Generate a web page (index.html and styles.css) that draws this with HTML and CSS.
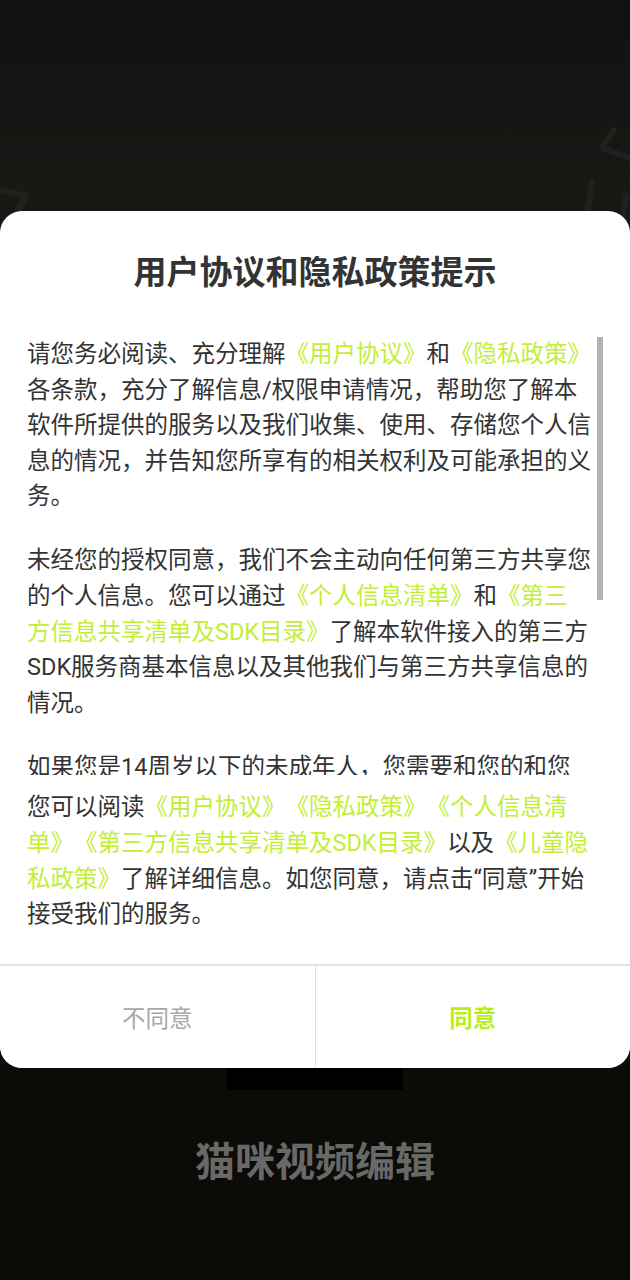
FILE: index.html
```html
<!DOCTYPE html>
<html lang="zh-CN">
<head>
<meta charset="utf-8">
<title>用户协议和隐私政策提示</title>
<link rel="stylesheet" href="styles.css">
</head>
<body>
<div class="screen">
  <svg class="decor" width="630" height="260" viewBox="0 0 630 260" aria-hidden="true">
    <g fill="none" stroke="#1f211e" stroke-width="6" stroke-linecap="round" stroke-linejoin="round">
      <path d="M2 190 L26 196 L14 218"/>
      <path d="M32 226 L40 262"/>
      <path d="M630 158 L602 148 L614 130"/>
      <path d="M592 182 L584 232"/>
      <path d="M626 196 L620 236"/>
    </g>
  </svg>

  <div class="dialog">
    <h1 class="title">用户协议和隐私政策提示</h1>
    <div class="scroll">
      <div class="scroll-inner">
        <p class="para">请您务必阅读、充分理解<span class="link">《用户协议》</span>和<span class="link">《隐私政策》</span>各条款，充分了解信息/权限申请情况，帮助您了解本软件所提供的服务以及我们收集、使用、存储您个人信息的情况，并告知您所享有的相关权利及可能承担的义务。</p>
        <p class="para">未经您的授权同意，我们不会主动向任何第三方共享您的个人信息。您可以通过<span class="link">《个人信息清单》</span>和<span class="link">《第三<br>方信息共享清单及SDK目录》</span>了解本软件接入的第三方SDK服务商基本信息以及其他我们与第三方共享信息的情况。</p>
        <p class="para">如果您是14周岁以下的未成年人，您需要和您的和您的监护人一起仔细阅读并同意<span class="link">《儿童隐私政策》</span>。</p>
      </div>
      <div class="scrollbar"></div>
    </div>
    <p class="summary">您可以阅读<span class="link">《用户协议》</span><span class="link">《隐私政策》</span><span class="link">《个人信息清单》</span><span class="link">《第三方信息共享清单及SDK目录》</span>以及<span class="link">《儿童隐私政策》</span>了解详细信息。如您同意，请点击“同意”开始接受我们的服务。</p>
    <div class="actions">
      <button class="btn btn-decline" type="button">不同意</button>
      <button class="btn btn-accept" type="button">同意</button>
    </div>
  </div>

  <div class="logo-bar"></div>
  <div class="app-name">猫咪视频编辑</div>
</div>
</body>
</html>
```

FILE: styles.css
```css
* {
  box-sizing: border-box;
}

html, body {
  margin: 0;
  padding: 0;
}

body {
  width: 630px;
  height: 1280px;
  overflow: hidden;
  background: linear-gradient(180deg, #101210 0px, #171915 190px, #10110d 700px, #0b0c08 1100px, #0b0c08 1280px);
  font-family: Roboto, "Noto Sans CJK SC", sans-serif;
  text-spacing-trim: space-all;
}

.screen {
  position: relative;
  width: 630px;
  height: 1280px;
  padding-top: 211px;
}

.decor {
  position: absolute;
  left: 0;
  top: 0;
}

.dialog {
  position: relative;
  width: 630px;
  background: #ffffff;
  border-radius: 22px;
  overflow: hidden;
}

.title {
  margin: 0;
  padding-top: 39px;
  height: 126px;
  font-family: "Noto Sans CJK SC", sans-serif;
  font-size: 33px;
  line-height: 40px;
  font-weight: 700;
  color: #333333;
  text-align: center;
}

.scroll {
  position: relative;
  margin: 0 27px;
  height: 438px;
  overflow: hidden;
}

.scroll-inner {
  width: 565px;
}

.para {
  margin: 0 0 28.5px 0;
  font-size: 23.5px;
  line-height: 35.6px;
  color: #333333;
}

.scrollbar {
  position: absolute;
  right: 0;
  top: -2px;
  width: 6px;
  height: 265px;
  background: #b4b4b4;
}

.summary {
  margin: 15px 0 0 27px;
  width: 567px;
  padding-bottom: 31px;
  font-size: 23.5px;
  line-height: 35.8px;
  color: #333333;
}

.link {
  color: #c3ee36;
}

.actions {
  display: flex;
  height: 104px;
  border-top: 2px solid #e3e3e3;
}

.btn {
  flex: 1;
  margin: 0;
  padding: 0;
  border: 0;
  background: #ffffff;
  font-family: "Noto Sans CJK SC", sans-serif;
  font-size: 23.5px;
  line-height: 30px;
  cursor: pointer;
}

.btn-decline {
  color: #a8a8a8;
  border-right: 1px solid #e3e3e3;
}

.btn-accept {
  color: #b7ee16;
  font-weight: 700;
}

.logo-bar {
  width: 176px;
  height: 22px;
  margin-left: 227px;
  background: #000000;
}

.app-name {
  margin-top: 44px;
  text-align: center;
  font-family: "Noto Sans CJK SC", sans-serif;
  font-size: 40px;
  line-height: 50px;
  font-weight: 700;
  color: #686868;
}
```
